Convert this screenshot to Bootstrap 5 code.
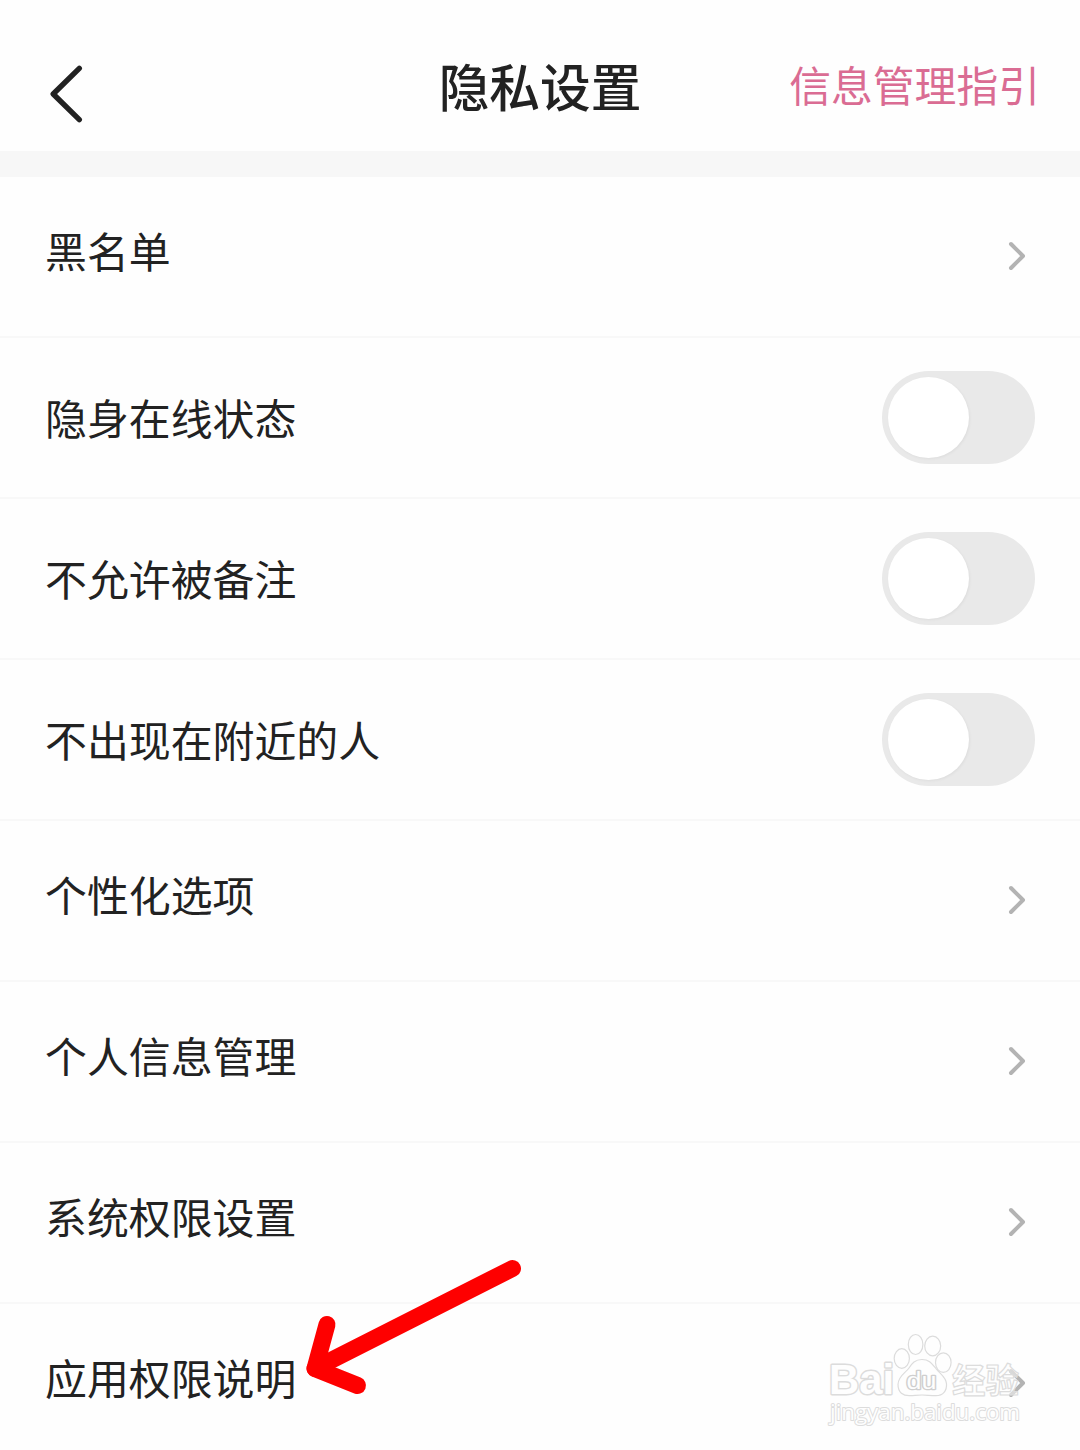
<!DOCTYPE html>
<html lang="zh-CN">
<head>
<meta charset="utf-8">
<meta name="viewport" content="width=device-width, initial-scale=1">
<title>隐私设置</title>
<link href="https://cdn.jsdelivr.net/npm/bootstrap@5.3.0/dist/css/bootstrap.min.css" rel="stylesheet">
<style>
  body { background: #fefefe; color: #222; font-family: "Noto Sans CJK SC", sans-serif; overflow: hidden; }
  .screen { width: 1080px; height: 1450px; }
  .topbar { height: 151px; padding: 0 41px; }
  .side { flex: 1 1 0; }
  .page-title { font-size: 50.7px; font-weight: 500; line-height: 76px; padding-bottom: 1px; margin-top: 20px; }
  .guide { color: #da6c93; font-size: 41.8px; line-height: 60px; white-space: nowrap; margin-right: -1px; }
  .guide-side { margin-top: 16px; }
  .back-btn { margin-top: 37px; line-height: 0; }
  .back-btn svg { margin-left: 5px; }
  .band { height: 26px; background: #f7f7f7; }
  .list-group-flush > .setting { height: 161px; padding: 0 45px; border-width: 0 0 2px; border-color: #f8f8f8; background: transparent; color: #222; }
  .list-group-flush > .setting:last-child { border-color: transparent; border-bottom-width: 2px; }
  .setting-label { font-size: 41.9px; line-height: 60px; }
  .nav-row .setting-label { margin-bottom: 14px; }
  .switch-row .setting-label { margin-bottom: 2px; }
  .chev { margin-right: 8px; margin-top: -1px; }
  .toggle { width: 153px; height: 93px; border-radius: 47px; background: #e9e9e9; padding: 6px; margin-top: -1px; }
  .knob { display: block; width: 81px; height: 81px; border-radius: 50%; background: #fff; box-shadow: 1px 1px 3px rgba(0,0,0,.05); }
  .overlay-art { left: 0; top: 0; pointer-events: none; }
</style>
<script src="https://cdn.jsdelivr.net/npm/bootstrap@5.3.0/dist/js/bootstrap.bundle.min.js"></script>
</head>
<body>
<main class="screen position-relative overflow-hidden">
  <header class="topbar d-flex align-items-center">
    <div class="side back-btn">
      <svg width="40" height="60" viewBox="0 0 40 60" fill="none" stroke="#222" stroke-width="5.4" stroke-linecap="round" stroke-linejoin="round"><path d="M33.3 4.3 7.2 30 33.3 55.7"/></svg>
    </div>
    <h1 class="page-title mb-0">隐私设置</h1>
    <div class="side guide-side d-flex justify-content-end"><a class="guide text-decoration-none" href="#">信息管理指引</a></div>
  </header>
  <div class="band"></div>
  <div class="list-group list-group-flush">
    <a href="#" class="setting nav-row list-group-item d-flex align-items-center justify-content-between"><span class="setting-label">黑名单</span><svg class="chev" width="20" height="32" viewBox="0 0 20 32" fill="none" stroke="#b3b3b3" stroke-width="4" stroke-linecap="round" stroke-linejoin="round"><path d="M4 4 16 16 4 28"/></svg></a>
    <div class="setting switch-row list-group-item d-flex align-items-center justify-content-between"><span class="setting-label">隐身在线状态</span><span class="toggle" role="switch" aria-checked="false"><span class="knob"></span></span></div>
    <div class="setting switch-row list-group-item d-flex align-items-center justify-content-between"><span class="setting-label">不允许被备注</span><span class="toggle" role="switch" aria-checked="false"><span class="knob"></span></span></div>
    <div class="setting switch-row list-group-item d-flex align-items-center justify-content-between"><span class="setting-label">不出现在附近的人</span><span class="toggle" role="switch" aria-checked="false"><span class="knob"></span></span></div>
    <a href="#" class="setting nav-row list-group-item d-flex align-items-center justify-content-between"><span class="setting-label">个性化选项</span><svg class="chev" width="20" height="32" viewBox="0 0 20 32" fill="none" stroke="#b3b3b3" stroke-width="4" stroke-linecap="round" stroke-linejoin="round"><path d="M4 4 16 16 4 28"/></svg></a>
    <a href="#" class="setting nav-row list-group-item d-flex align-items-center justify-content-between"><span class="setting-label">个人信息管理</span><svg class="chev" width="20" height="32" viewBox="0 0 20 32" fill="none" stroke="#b3b3b3" stroke-width="4" stroke-linecap="round" stroke-linejoin="round"><path d="M4 4 16 16 4 28"/></svg></a>
    <a href="#" class="setting nav-row list-group-item d-flex align-items-center justify-content-between"><span class="setting-label">系统权限设置</span><svg class="chev" width="20" height="32" viewBox="0 0 20 32" fill="none" stroke="#b3b3b3" stroke-width="4" stroke-linecap="round" stroke-linejoin="round"><path d="M4 4 16 16 4 28"/></svg></a>
    <a href="#" class="setting nav-row list-group-item d-flex align-items-center justify-content-between"><span class="setting-label">应用权限说明</span><svg class="chev" width="20" height="32" viewBox="0 0 20 32" fill="none" stroke="#b3b3b3" stroke-width="4" stroke-linecap="round" stroke-linejoin="round"><path d="M4 4 16 16 4 28"/></svg></a>
  </div>

  <svg class="overlay-art position-absolute" width="1080" height="1450" viewBox="0 0 1080 1450">
    <!-- hand-drawn pointer to the last entry -->
    <g fill="none" stroke="#fe0000" stroke-width="17" stroke-linecap="round" stroke-linejoin="round">
      <path d="M512.5 1268.5 315 1368.5"/>
      <path d="M327 1324.500 315 1368.500 357.500 1385.500"/>
    </g>
    <!-- site watermark -->
    <g fill="#fefefe" stroke="#dcdcdc" stroke-width="1.2" stroke-linejoin="round">
      <text x="829" y="1393.500" font-family="'Liberation Sans',sans-serif" font-weight="700" font-size="43" stroke-width="3" paint-order="stroke" textLength="65" lengthAdjust="spacingAndGlyphs">Bai</text>
      <ellipse cx="901.800" cy="1358.500" rx="7.600" ry="9.800"/>
      <ellipse cx="915.600" cy="1344.500" rx="7.300" ry="10"/>
      <ellipse cx="932.700" cy="1346" rx="8" ry="9.800"/>
      <ellipse cx="943.300" cy="1362.600" rx="7.800" ry="9.800"/>
      <path d="M922 1359.500c-7 0-10 4-13 8.500s-11 8-11 16.500c0 8 5 11.500 12 11.200 5-.2 7-.7 12-.7s8 .7 14 .7c7 0 11-5 10.500-12-.5-7-7-10-11-15.700-4-5-6.500-8.500-13.500-8.500Z"/>
      <text x="906.500" y="1389" font-family="'Liberation Sans',sans-serif" font-size="23" stroke="#cfcfcf" stroke-width="2.600" paint-order="stroke" textLength="30" lengthAdjust="spacingAndGlyphs">du</text>
      <text x="952" y="1392.500" font-family="'Noto Sans CJK SC',sans-serif" font-size="34" font-weight="700" fill-opacity=".5" textLength="67" lengthAdjust="spacingAndGlyphs">经验</text>
      <text x="830" y="1420" font-family="'Open Sans','Noto Sans',sans-serif" font-size="22.500" font-weight="400" stroke-width="2" paint-order="stroke" textLength="190" lengthAdjust="spacingAndGlyphs">jingyan.baidu.com</text>
    </g>
  </svg>
</main>
</body>
</html>
